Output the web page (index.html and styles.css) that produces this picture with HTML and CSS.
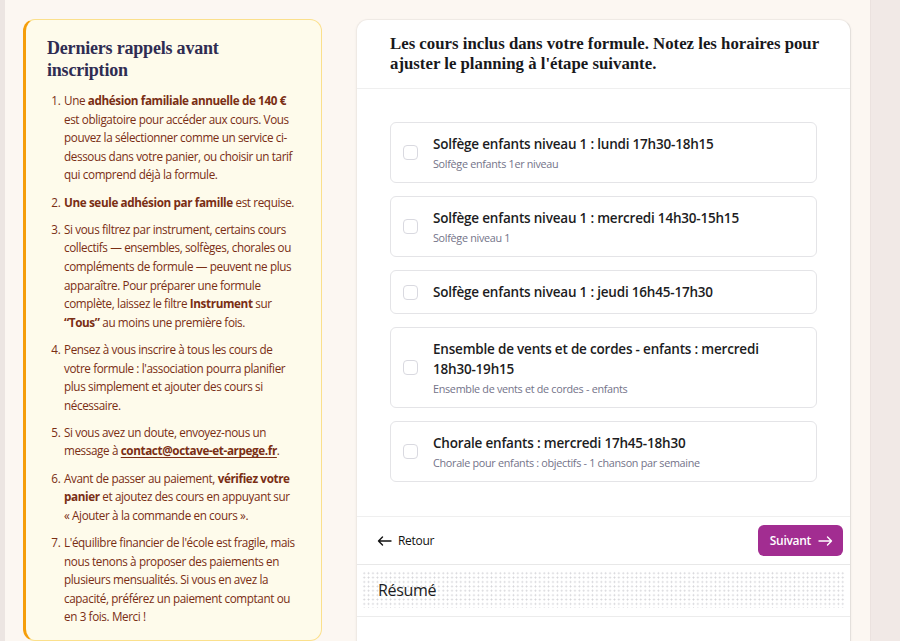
FILE: index.html
```html
<!DOCTYPE html>
<html lang="fr">
<head>
    <meta charset="UTF-8">
    <meta name="viewport" content="width=device-width, initial-scale=1.0">
    <title>Inscription - cours</title>
    <link rel="stylesheet" href="styles.css">
</head>
<body>
    <div class="page">
        <div class="edge"></div>

        <main class="layout">
            <aside class="reminders">
                <h2>Derniers rappels avant inscription</h2>
                <ol>
                    <li>Une <strong>adhésion familiale annuelle de 140 €</strong> est obligatoire pour accéder aux cours. Vous pouvez la sélectionner comme un service ci-dessous dans votre panier, ou choisir un tarif qui comprend déjà la formule.</li>
                    <li><strong>Une seule adhésion par famille</strong> est requise.</li>
                    <li>Si vous filtrez par instrument, certains cours collectifs — ensembles, solfèges, chorales ou compléments de formule — peuvent ne plus apparaître. Pour préparer une formule complète, laissez le filtre <strong>Instrument</strong> sur <strong>“Tous”</strong> au moins une première fois.</li>
                    <li>Pensez à vous inscrire à tous les cours de votre formule : l'association pourra planifier plus simplement et ajouter des cours si nécessaire.</li>
                    <li>Si vous avez un doute, envoyez-nous un message à <a href="mailto:contact@octave-et-arpege.fr">contact@octave-et-arpege.fr</a>.</li>
                    <li>Avant de passer au paiement, <strong>vérifiez votre panier</strong> et ajoutez des cours en appuyant sur «&nbsp;Ajouter à la commande en cours&nbsp;».</li>
                    <li>L'équilibre financier de l'école est fragile, mais nous tenons à proposer des paiements en plusieurs mensualités. Si vous en avez la capacité, préférez un paiement comptant ou en 3 fois. Merci&nbsp;!</li>
                </ol>
            </aside>

            <section class="step-card">
                <div class="step-head">
                    <h3>Les cours inclus dans votre formule. Notez les horaires pour ajuster le planning à l'étape suivante.</h3>
                </div>

                <div class="course-list">
                    <label class="course">
                        <input type="checkbox" class="course-check">
                        <span class="course-text">
                            <span class="course-title">Solfège enfants niveau 1 : lundi 17h30-18h15</span>
                            <span class="course-sub">Solfège enfants 1er niveau</span>
                        </span>
                    </label>
                    <label class="course">
                        <input type="checkbox" class="course-check">
                        <span class="course-text">
                            <span class="course-title">Solfège enfants niveau 1 : mercredi 14h30-15h15</span>
                            <span class="course-sub">Solfège niveau 1</span>
                        </span>
                    </label>
                    <label class="course">
                        <input type="checkbox" class="course-check">
                        <span class="course-text">
                            <span class="course-title">Solfège enfants niveau 1 : jeudi 16h45-17h30</span>
                        </span>
                    </label>
                    <label class="course">
                        <input type="checkbox" class="course-check">
                        <span class="course-text">
                            <span class="course-title">Ensemble de vents et de cordes - enfants : mercredi 18h30-19h15</span>
                            <span class="course-sub">Ensemble de vents et de cordes - enfants</span>
                        </span>
                    </label>
                    <label class="course">
                        <input type="checkbox" class="course-check">
                        <span class="course-text">
                            <span class="course-title">Chorale enfants : mercredi 17h45-18h30</span>
                            <span class="course-sub">Chorale pour enfants : objectifs - 1 chanson par semaine</span>
                        </span>
                    </label>
                </div>

                <div class="step-nav">
                    <button type="button" class="btn-back">
                        <svg width="15" height="10" viewBox="0 0 15 10" fill="none" stroke="currentColor" stroke-width="1.4" stroke-linecap="round" stroke-linejoin="round"><path d="M14 5H1.5M5.5 1 1.5 5l4 4"/></svg>
                        Retour
                    </button>
                    <button type="button" class="btn-next">
                        Suivant
                        <svg width="15" height="10" viewBox="0 0 15 10" fill="none" stroke="currentColor" stroke-width="1.4" stroke-linecap="round" stroke-linejoin="round"><path d="M1 5h12.5M9.5 1l4 4-4 4"/></svg>
                    </button>
                </div>

                <div class="summary">
                    <div class="summary-head">
                        <h4>Résumé</h4>
                    </div>
                </div>
            </section>
        </main>

        <div class="scroll-track"></div>
    </div>
</body>
</html>
```

FILE: styles.css
```css
* {
    margin: 0;
    padding: 0;
    box-sizing: border-box;
}

body {
    font-family: 'Open Sans', 'Noto Sans', sans-serif;
    background: #fcf7f2;
    color: #1f1f24;
    overflow: hidden;
}

.page {
    display: flex;
    height: 100vh;
}

.edge {
    width: 5px;
    background: #ece5e2;
}

.scroll-track {
    width: 30px;
    background: #f1e9e6;
    border-left: 1px solid #ebe2df;
}

.layout {
    flex: 1;
    display: grid;
    grid-template-columns: 299px 495px;
    column-gap: 34px;
    align-items: start;
    padding: 19px 19px 0 18px;
}

/* Encadré des rappels */
.reminders {
    background: #fefbeb;
    border: 1px solid #fbe08c;
    border-left: 3px solid #f59e0b;
    border-radius: 12px;
    padding: 17px 22px 14px 21px;
}

.reminders h2 {
    font-family: 'Liberation Serif', serif;
    font-size: 18px;
    line-height: 22px;
    font-weight: bold;
    letter-spacing: -0.2px;
    color: #2f2c52;
}

.reminders ol {
    margin-top: 10px;
    padding-left: 16px;
    color: #7a2e14;
    font-size: 11.7px;
    line-height: 18.6px;
    letter-spacing: -0.38px;
}

.reminders li {
    margin-bottom: 8.6px;
    padding-left: 1px;
}

.reminders li:last-child {
    margin-bottom: 0;
}

.reminders strong {
    font-weight: 700;
}

.reminders a {
    color: inherit;
    font-weight: 700;
    text-decoration: underline;
    text-underline-offset: 2px;
}

/* Carte de l'étape */
.step-card {
    background: #fff;
    border: 1px solid #efeae5;
    border-right-color: #e4e0dc;
    border-bottom: none;
    border-radius: 12px 12px 0 0;
    box-shadow: 0 1px 3px rgba(0, 0, 0, 0.05);
    min-height: 640px;
}

.step-head {
    padding: 14px 16px 14px 33px;
    border-bottom: 1px solid #efefef;
}

.step-head h3 {
    font-family: 'Liberation Serif', serif;
    font-size: 16.8px;
    line-height: 20px;
    font-weight: bold;
    color: #18181b;
}

.course-list {
    display: flex;
    flex-direction: column;
    gap: 13px;
    padding: 33px 33px 34px;
}

.course {
    display: flex;
    align-items: center;
    gap: 15px;
    padding: 11px 14px 11px 12px;
    border: 1px solid #e4e4e7;
    border-radius: 6px;
    cursor: pointer;
}

.course-check {
    appearance: none;
    -webkit-appearance: none;
    flex: none;
    width: 15px;
    height: 15px;
    border: 1px solid #d9d9e0;
    border-radius: 4px;
    background: #fff;
}

.course-text {
    display: flex;
    flex-direction: column;
    gap: 2px;
}

.course-title {
    font-size: 13.5px;
    line-height: 20px;
    font-weight: 600;
    color: #1c1c22;
    letter-spacing: -0.2px;
}

.course-sub {
    font-size: 10.8px;
    line-height: 15px;
    color: #737389;
    letter-spacing: -0.3px;
}

/* Navigation */
.step-nav {
    display: flex;
    align-items: center;
    justify-content: space-between;
    padding: 8px 7px 8px 20px;
    border-top: 1px solid #efefef;
    border-bottom: 1px solid #e8e8e8;
}

.btn-back,
.btn-next {
    display: flex;
    align-items: center;
    font-family: inherit;
    font-size: 12px;
    border: none;
    cursor: pointer;
    letter-spacing: -0.3px;
}

.btn-back {
    background: none;
    color: #111;
    height: 31px;
    gap: 6px;
    font-weight: 500;
}

.btn-next {
    background: #a22d91;
    color: #fff;
    height: 31px;
    padding: 0 10px 0 12px;
    border-radius: 6px;
    gap: 7px;
    font-weight: 600;
}

/* Résumé */
.summary {
    padding: 6px 5px 8px 5px;
    border-bottom: 1px solid #ececec;
}

.summary-head {
    background-image: radial-gradient(circle, #d4d4d8 0.8px, transparent 1px);
    background-size: 4.4px 4.4px;
    padding: 8px 16px 7px 16px;
}

.summary-head h4 {
    font-size: 16px;
    line-height: 22px;
    font-weight: 500;
    color: #1c1c22;
    letter-spacing: -0.3px;
}
```
